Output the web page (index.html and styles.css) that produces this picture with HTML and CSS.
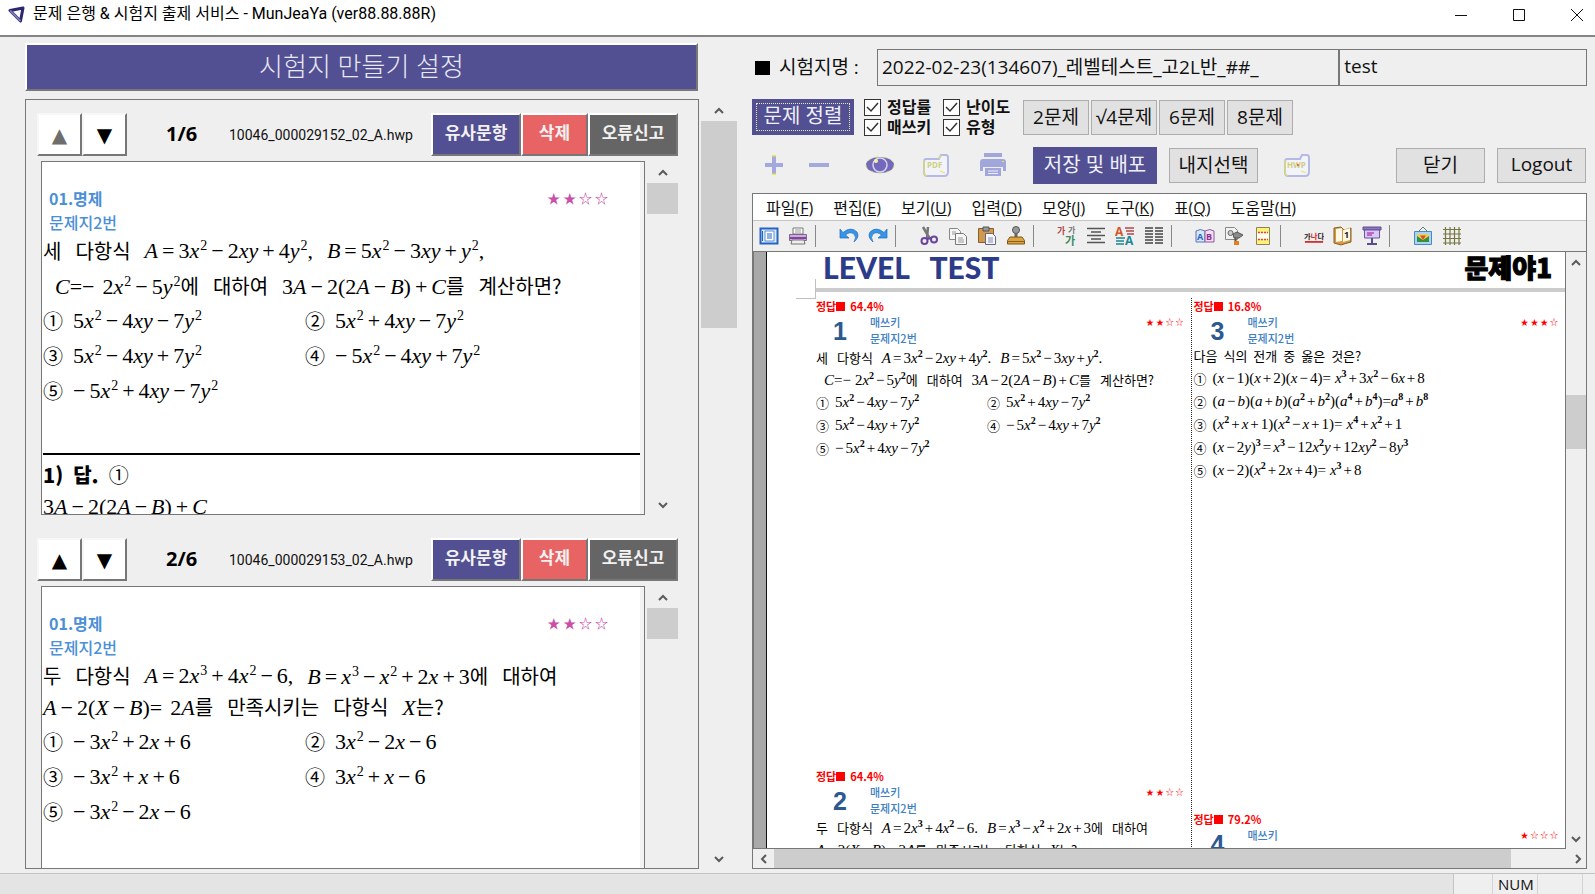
FILE: index.html
```
<!DOCTYPE html>
<html lang="ko">
<head>
<meta charset="utf-8">
<title>문제 은행 &amp; 시험지 출제 서비스</title>
<link rel="stylesheet" href="styles.css">
</head>
<body>
<header class="titlebar">
  <svg class="logo" viewBox="0 0 18 18"><path d="M2 4.500 15 2 12.500 15Z" fill="#fff" stroke="#2b2670" stroke-width="3" stroke-linejoin="round"/><path d="M2 4.500 12.500 15" stroke="#7d79b8" stroke-width="2"/></svg>
  <h1 class="title">문제 은행 &amp; 시험지 출제 서비스 - MunJeaYa (ver88.88.88R)</h1>
  <button class="win" aria-label="최소화"><svg viewBox="0 0 14 14"><path d="M1 7.500H13"/></svg></button>
  <button class="win" aria-label="최대화"><svg viewBox="0 0 14 14"><path d="M1.500 1.500h11v11h-11Z"/></svg></button>
  <button class="win" aria-label="닫기"><svg viewBox="0 0 14 14"><path d="M1 1 13 13M13 1 1 13"/></svg></button>
</header>

<main class="main">
  <section class="left">
    <button class="heading">시험지 만들기 설정</button>
    <div class="listwrap">
      <div class="panel">
        <article class="card">
          <div class="cardhead">
            <button class="move off">▲</button><button class="move">▼</button>
            <strong class="count">1/6</strong>
            <span class="file">10046_000029152_02_A.hwp</span>
            <button class="act blue">유사문항</button><button class="act red">삭제</button><button class="act gray">오류신고</button>
          </div>
          <div class="cardbody">
            <div class="doc">
              <div class="tags"><b>01.명제</b><span class="stars">★ ★ ☆ ☆</span></div>
              <div class="tags">문제지2번</div>
              <p class="line"><span>세</span><span>다항식</span><span class="m"><i>A</i><span class="o">=</span>3<i>x</i><sup>2</sup><span class="o">−</span>2<i>xy</i><span class="o">+</span>4<i>y</i><sup>2</sup>,</span><span class="m"><i>B</i><span class="o">=</span>5<i>x</i><sup>2</sup><span class="o">−</span>3<i>xy</i><span class="o">+</span><i>y</i><sup>2</sup>,</span></p>
              <p class="line ind"><span><span class="m"><i>C</i>=−<span class="o"></span>2<i>x</i><sup>2</sup><span class="o">−</span>5<i>y</i><sup>2</sup></span>에</span><span>대하여</span><span><span class="m">3<i>A</i><span class="o">−</span>2(2<i>A</i><span class="o">−</span><i>B</i>)<span class="o">+</span><i>C</i></span>를</span><span>계산하면?</span></p>
              <div class="opts">
                <p class="line"><span>①</span><span class="m">5<i>x</i><sup>2</sup><span class="o">−</span>4<i>xy</i><span class="o">−</span>7<i>y</i><sup>2</sup></span></p>
                <p class="line"><span>②</span><span class="m">5<i>x</i><sup>2</sup><span class="o">+</span>4<i>xy</i><span class="o">−</span>7<i>y</i><sup>2</sup></span></p>
                <p class="line"><span>③</span><span class="m">5<i>x</i><sup>2</sup><span class="o">−</span>4<i>xy</i><span class="o">+</span>7<i>y</i><sup>2</sup></span></p>
                <p class="line"><span>④</span><span class="m"><span class="o">−</span>5<i>x</i><sup>2</sup><span class="o">−</span>4<i>xy</i><span class="o">+</span>7<i>y</i><sup>2</sup></span></p>
                <p class="line"><span>⑤</span><span class="m"><span class="o">−</span>5<i>x</i><sup>2</sup><span class="o">+</span>4<i>xy</i><span class="o">−</span>7<i>y</i><sup>2</sup></span></p>
              </div>
              <div class="answer">
                <p class="line"><b>1)</b><b>답.</b><span>①</span></p>
                <p class="line"><span class="m">3<i>A</i><span class="o">−</span>2(2<i>A</i><span class="o">−</span><i>B</i>)<span class="o">+</span><i>C</i></span></p>
              </div>
            </div>
            <div class="vbar"><svg class="arr" viewBox="0 0 10 7"><path d="M1 6 5 2 9 6"/></svg><div class="thumb"></div><svg class="arr end" viewBox="0 0 10 7"><path d="M1 1 5 5 9 1"/></svg></div>
          </div>
        </article>
        <article class="card">
          <div class="cardhead">
            <button class="move">▲</button><button class="move">▼</button>
            <strong class="count">2/6</strong>
            <span class="file">10046_000029153_02_A.hwp</span>
            <button class="act blue">유사문항</button><button class="act red">삭제</button><button class="act gray">오류신고</button>
          </div>
          <div class="cardbody">
            <div class="doc">
              <div class="tags"><b>01.명제</b><span class="stars">★ ★ ☆ ☆</span></div>
              <div class="tags">문제지2번</div>
              <p class="line"><span>두</span><span>다항식</span><span class="m"><i>A</i><span class="o">=</span>2<i>x</i><sup>3</sup><span class="o">+</span>4<i>x</i><sup>2</sup><span class="o">−</span>6,</span><span><span class="m"><i>B</i><span class="o">=</span><i>x</i><sup>3</sup><span class="o">−</span><i>x</i><sup>2</sup><span class="o">+</span>2<i>x</i><span class="o">+</span>3</span>에</span><span>대하여</span></p>
              <p class="line tight"><span><span class="m"><i>A</i><span class="o">−</span>2(<i>X</i><span class="o">−</span><i>B</i>)=<span class="o"></span>2<i>A</i></span>를</span><span>만족시키는</span><span>다항식</span><span><span class="m"><i>X</i></span>는?</span></p>
              <div class="opts">
                <p class="line"><span>①</span><span class="m"><span class="o">−</span>3<i>x</i><sup>2</sup><span class="o">+</span>2<i>x</i><span class="o">+</span>6</span></p>
                <p class="line"><span>②</span><span class="m">3<i>x</i><sup>2</sup><span class="o">−</span>2<i>x</i><span class="o">−</span>6</span></p>
                <p class="line"><span>③</span><span class="m"><span class="o">−</span>3<i>x</i><sup>2</sup><span class="o">+</span><i>x</i><span class="o">+</span>6</span></p>
                <p class="line"><span>④</span><span class="m">3<i>x</i><sup>2</sup><span class="o">+</span><i>x</i><span class="o">−</span>6</span></p>
                <p class="line"><span>⑤</span><span class="m"><span class="o">−</span>3<i>x</i><sup>2</sup><span class="o">−</span>2<i>x</i><span class="o">−</span>6</span></p>
              </div>
            </div>
            <div class="vbar"><svg class="arr" viewBox="0 0 10 7"><path d="M1 6 5 2 9 6"/></svg><div class="thumb"></div></div>
          </div>
        </article>
      </div>
      <div class="vbar outer"><svg class="arr" viewBox="0 0 10 7"><path d="M1 6 5 2 9 6"/></svg><div class="thumb"></div><svg class="arr end" viewBox="0 0 10 7"><path d="M1 1 5 5 9 1"/></svg></div>
    </div>
  </section>

  <section class="right">
    <div class="namerow">
      <label for="exam"><span class="sq"></span>시험지명 :</label>
      <input id="exam" class="name" value="2022-02-23(134607)_레벨테스트_고2L반_##_">
      <input class="name user" aria-label="사용자" value="test">
    </div>
    <div class="sortrow">
      <button class="primary sort"><span>문제 정렬</span></button>
      <div class="checks">
        <label><input type="checkbox" checked>정답률</label>
        <label><input type="checkbox" checked>난이도</label>
        <label><input type="checkbox" checked>매쓰키</label>
        <label><input type="checkbox" checked>유형</label>
      </div>
      <div class="counts"><button class="btn">2문제</button><button class="btn">√4문제</button><button class="btn">6문제</button><button class="btn">8문제</button></div>
    </div>
    <div class="actionrow">
      <div class="icons">
        <button class="ico" aria-label="확대"><svg viewBox="0 0 30 30"><path d="M15 5V25" stroke="#e8e84a" stroke-width="4"/><path d="M6 15H24M15 6.500V23.500" stroke="#a3a9dc" stroke-width="4"/></svg></button>
        <button class="ico" aria-label="축소"><svg viewBox="0 0 30 30"><path d="M5 15H25" stroke="#a3a9dc" stroke-width="4"/></svg></button>
        <button class="ico eye" aria-label="미리보기"><svg viewBox="0 0 30 30"><ellipse cx="15" cy="15" rx="14" ry="8" fill="#7468bd" stroke="#cfdc50" stroke-dasharray="3 5"/><circle cx="15" cy="15" r="7" fill="#7468bd" stroke="#d7d4ee" stroke-width="1.500"/><circle cx="11" cy="11" r="2" fill="#f5f3a0"/></svg></button>
        <button class="ico" aria-label="PDF"><svg viewBox="0 0 30 30"><path d="M5 9H18L20 5H25Q27 5 27 8V22Q27 26 23 26H6Q3 26 3 22V12Q3 9 5 9Z" fill="#f3f3fb" stroke="#b4b9e6" stroke-width="2"/><path d="M3 10V22Q3 26 6 26M18 9 20 5" stroke="#e9e94a" stroke-width="1" fill="none"/><text x="6" y="18" font-size="8" font-weight="bold" fill="#cfcf7c">PDF</text><path d="M19 21 24 23" stroke="#e9e94a"/></svg></button>
        <button class="ico print" aria-label="인쇄"><svg viewBox="0 0 30 30"><path d="M6 3H24V7H6ZM5 9H25Q28 9 28 12V21H25V17H5V21H2V12Q2 9 5 9ZM7 18H23V26H7Z" fill="#a1a7db"/><path d="M10 21H20M10 23.500H20" stroke="#eef"/><path d="M24 11.500H26" stroke="#e8e84a"/></svg></button>
      </div>
      <button class="primary save">저장 및 배포</button>
      <button class="btn wide">내지선택</button>
      <button class="ico hwp" aria-label="HWP"><svg viewBox="0 0 30 30"><path d="M5 9H18L20 5H25Q27 5 27 8V22Q27 26 23 26H6Q3 26 3 22V12Q3 9 5 9Z" fill="#f3f3fb" stroke="#b4b9e6" stroke-width="2"/><path d="M3 10V22Q3 26 6 26" stroke="#e9e94a" fill="none"/><text x="5" y="18" font-size="8" font-weight="bold" fill="#cfcf7c">HWP</text><circle cx="16" cy="15" r="1" fill="#e05050"/><path d="M19 21 24 23" stroke="#e9e94a"/></svg></button>
      <button class="btn wide push">닫기</button>
      <button class="btn wide">Logout</button>
    </div>

    <div class="editor">
      <nav class="menu">
        <button>파일(<u>F</u>)</button><button>편집(<u>E</u>)</button><button>보기(<u>U</u>)</button><button>입력(<u>D</u>)</button><button>모양(<u>J</u>)</button><button>도구(<u>K</u>)</button><button>표(<u>Q</u>)</button><button>도움말(<u>H</u>)</button>
      </nav>
      <div class="tools">
        <div class="group">
          <button aria-label="쪽 보기"><svg viewBox="0 0 20 20"><path d="M1.500 2.500h17v15h-17Z" fill="#dce9fb" stroke="#2465c4" stroke-width="2"/><path d="M6 5h9v10H6Z" fill="#fff" stroke="#5d8fd6"/><path d="M3.500 5v10M8 8h5M8 10h5M8 12h5" stroke="#2465c4"/></svg></button>
          <button aria-label="인쇄"><svg viewBox="0 0 20 20"><path d="M5 2h10v6H5Z" fill="#fff" stroke="#777"/><path d="M7 4h6M7 6h6" stroke="#999"/><path d="M1.500 8.500h17v6h-17Z" fill="#c9aede" stroke="#776a88"/><path d="M2 12h16" stroke="#8b3fa5" stroke-width="2"/><path d="M4 14h12l1 4H3Z" fill="#eee" stroke="#777"/></svg></button>
        </div>
        <div class="group">
          <button aria-label="되돌리기"><svg viewBox="0 0 20 20"><path d="M1 3V12H10L6.500 9Q11 5 15 8 18 11 15 16 21 11 18 6 12 0 4 6.500Z" fill="#3795e8" stroke="#1f6fc0" stroke-width=".7"/></svg></button>
          <button aria-label="다시 실행"><svg viewBox="0 0 20 20"><path d="M19 3V12H10L13.500 9Q9 5 5 8 2 11 5 16-1 11 2 6 8 0 16 6.500Z" fill="#3795e8" stroke="#1f6fc0" stroke-width=".7"/></svg></button>
        </div>
        <div class="group">
          <button aria-label="오려 두기"><svg viewBox="0 0 20 20"><path d="M4 1 11 13M9 1 8 12" stroke="#777" stroke-width="2.500"/><circle cx="5.500" cy="15" r="3" fill="none" stroke="#6a45a0" stroke-width="2"/><circle cx="15" cy="13.500" r="3" fill="none" stroke="#6a45a0" stroke-width="2"/><path d="M8 13 12 12" stroke="#6a45a0" stroke-width="2"/></svg></button>
          <button aria-label="복사하기"><svg viewBox="0 0 20 20"><path d="M1.500 2.500h8l3 3v8h-11Z" fill="#f6f6f6" stroke="#888"/><path d="M7.500 7.500h8l3 3v8h-11Z" fill="#f6f6f6" stroke="#777"/><path d="M4 6h4M4 8h3M10 12h5M10 14h6M10 16h6" stroke="#999"/></svg></button>
          <button aria-label="붙이기"><svg viewBox="0 0 20 20"><path d="M1.500 2.500h15v14h-15Z" fill="#cf9a4e" stroke="#8a5f26"/><path d="M6 1h6v4H6Z" fill="#999" stroke="#555"/><path d="M8.500 7.500h7l3 3v8h-10Z" fill="#f4f8fb" stroke="#668"/><path d="M11 12h5M11 14h5M11 16h5" stroke="#88a"/></svg></button>
          <button aria-label="모양 복사"><svg viewBox="0 0 20 20"><circle cx="10" cy="4" r="3.500" fill="#999" stroke="#555"/><path d="M8.500 7h3v5h-3Z" fill="#666"/><path d="M1.500 14.500 4 11h12l2.500 3.500v3.500h-17Z" fill="#dca33e" stroke="#7c561b"/><path d="M2 15.500h16" stroke="#8a5f26"/></svg></button>
        </div>
        <div class="group">
          <button aria-label="글자 모양"><svg viewBox="0 0 20 20"><text x="0" y="8" font-size="9" font-weight="bold" fill="#b34848">가</text><text x="11" y="7" font-size="8" font-weight="bold" fill="#777">가</text><text x="8" y="19" font-size="11" font-weight="bold" fill="#3e8a5e">가</text></svg></button>
          <button aria-label="문단 모양"><svg viewBox="0 0 20 20"><path d="M1 2.500h18M5 6h10M1 9.500h18M5 13h10M1 16.500h18" stroke="#555" stroke-width="1.500"/></svg></button>
          <button aria-label="스타일"><svg viewBox="0 0 20 20"><text x="0" y="10" font-size="12" font-weight="bold" fill="#d4552a">A</text><text x="10" y="19" font-size="12" font-weight="bold" fill="#1c8796">A</text><path d="M10 2h9M11 5h8M12 8h7" stroke="#b34848" stroke-width="1.500"/><path d="M1 12h9M1 15h8M1 18h8" stroke="#1c8796" stroke-width="1.500"/></svg></button>
          <button aria-label="다단"><svg viewBox="0 0 20 20"><path d="M1 2h8M11 2h8M1 5h8M11 5h8M1 8h8M11 8h8M1 11h8M11 11h8M1 14h8M11 14h8M1 17h8M11 17h8" stroke="#444" stroke-width="1.500"/></svg></button>
        </div>
        <div class="group">
          <button aria-label="맞춤법"><svg viewBox="0 0 20 20"><path d="M1 5Q5 2 10 5V16H1Z" fill="#d5e6fb" stroke="#5576b5"/><path d="M10 5Q15 2 19 5V16H10Z" fill="#f4dcf2" stroke="#8a5a99"/><text x="2" y="14" font-size="9" font-weight="bold" fill="#2465c4">A</text><text x="11" y="14" font-size="9" font-weight="bold" fill="#8b2f95">B</text></svg></button>
          <button aria-label="찾기"><svg viewBox="0 0 20 20"><path d="M1.500 1.500h9l3 3v9h-12Z" fill="#f2f2f2" stroke="#888"/><circle cx="6.500" cy="7" r="2.500" fill="#ccc" stroke="#666"/><path d="M9 8 13 6 19 9 15 12H10Z" fill="#8a8a8a" stroke="#555"/><path d="M11.500 12v3" stroke="#555" stroke-width="2"/><path d="M10 15h5v4h-5Z" fill="#e07f1c"/></svg></button>
          <button aria-label="쪽 나누기"><svg viewBox="0 0 20 20"><path d="M3.500 1.500h13v17h-13Z" fill="#fff27a" stroke="#8b8458"/><path d="M4 7h12v6H4Z" fill="#fffef0"/><path d="M5 6.500h10M5 13.500h10" stroke="#e04040" stroke-width="1.500" stroke-dasharray="2 1"/></svg></button>
        </div>
        <div class="group">
          <button aria-label="글자 바꾸기"><svg viewBox="0 0 22 20"><text x="0" y="13" font-size="8" font-weight="bold" fill="#222">가<tspan fill="#d22">나</tspan>다</text><path d="M1 16.500h20" stroke="#c33" stroke-width="2"/></svg></button>
          <button aria-label="사전"><svg viewBox="0 0 20 20"><path d="M1 2 8 1l3 3 7-2v14l-7 2-3 1-7-2Z" fill="#d39a45" stroke="#8a5f26"/><path d="M3 3 9 2v13l-6 1ZM10 4l7-2v12l-7 2Z" fill="#fff8e4"/><text x="11" y="12" font-size="9" font-weight="bold" fill="#222">1</text></svg></button>
          <button aria-label="프레젠테이션"><svg viewBox="0 0 20 20"><path d="M1 1h18v3H1Z" fill="#8d76c2" stroke="#5c4c8b"/><path d="M2.500 4h15v8h-15Z" fill="#d9c9f2" stroke="#6a57a0"/><path d="M5 7h7M5 9h5" stroke="#b246b8" stroke-width="1.500"/><path d="M10 12v6M5 18h10" stroke="#5c4c8b" stroke-width="2"/></svg></button>
        </div>
        <div class="group">
          <button aria-label="그림"><svg viewBox="0 0 20 20"><path d="M6 5 10 1 14 5" fill="none" stroke="#677"/><path d="M1.500 5.500h17v13h-17Z" fill="#a8d4f5" stroke="#4a88bd"/><path d="M4 8h12v8H4Z" fill="#f2cf54"/><path d="M4 10 10 14 16 10v6H4Z" fill="#3a8f3a"/><path d="M7 9.500h6L10 14Z" fill="#d2522c"/></svg></button>
          <button aria-label="격자"><svg viewBox="0 0 20 20"><path d="M3.500 1v18M8 1v18M12.500 1v18M17 1v18M1 3.500h18M1 8h18M1 12.500h18M1 17h18" stroke="#777542" stroke-width="1.200"/></svg></button>
        </div>
      </div>
      <div class="view">
        <div class="canvas">
          <div class="paper">
            <div class="papertop"><h2>LEVEL&nbsp;&nbsp; TEST</h2><strong>문제야1</strong></div>
            <div class="cols">
              <span class="corner"></span>
              <div class="col">
                <article class="q">
                  <div class="rate">정답<span class="mark"></span>64.4%</div>
                  <div class="qhead"><b class="num">1</b><div>매쓰키<br>문제지2번</div><span class="stars">★ ★ ☆ ☆</span></div>
                  <p class="line"><span>세</span><span>다항식</span><span class="m"><i>A</i><span class="o">=</span>3<i>x</i><sup>2</sup><span class="o">−</span>2<i>xy</i><span class="o">+</span>4<i>y</i><sup>2</sup>.</span><span class="m"><i>B</i><span class="o">=</span>5<i>x</i><sup>2</sup><span class="o">−</span>3<i>xy</i><span class="o">+</span><i>y</i><sup>2</sup>.</span></p>
                  <p class="line ind"><span><span class="m"><i>C</i>=−<span class="o"></span>2<i>x</i><sup>2</sup><span class="o">−</span>5<i>y</i><sup>2</sup></span>에</span><span>대하여</span><span><span class="m">3<i>A</i><span class="o">−</span>2(2<i>A</i><span class="o">−</span><i>B</i>)<span class="o">+</span><i>C</i></span>를</span><span>계산하면?</span></p>
                  <div class="opts">
                    <p class="line"><span>①</span><span class="m">5<i>x</i><sup>2</sup><span class="o">−</span>4<i>xy</i><span class="o">−</span>7<i>y</i><sup>2</sup></span></p>
                    <p class="line"><span>②</span><span class="m">5<i>x</i><sup>2</sup><span class="o">+</span>4<i>xy</i><span class="o">−</span>7<i>y</i><sup>2</sup></span></p>
                    <p class="line"><span>③</span><span class="m">5<i>x</i><sup>2</sup><span class="o">−</span>4<i>xy</i><span class="o">+</span>7<i>y</i><sup>2</sup></span></p>
                    <p class="line"><span>④</span><span class="m"><span class="o">−</span>5<i>x</i><sup>2</sup><span class="o">−</span>4<i>xy</i><span class="o">+</span>7<i>y</i><sup>2</sup></span></p>
                    <p class="line"><span>⑤</span><span class="m"><span class="o">−</span>5<i>x</i><sup>2</sup><span class="o">+</span>4<i>xy</i><span class="o">−</span>7<i>y</i><sup>2</sup></span></p>
                  </div>
                </article>
                <article class="q">
                  <div class="rate">정답<span class="mark"></span>64.4%</div>
                  <div class="qhead"><b class="num">2</b><div>매쓰키<br>문제지2번</div><span class="stars">★ ★ ☆ ☆</span></div>
                  <p class="line"><span>두</span><span>다항식</span><span class="m"><i>A</i><span class="o">=</span>2<i>x</i><sup>3</sup><span class="o">+</span>4<i>x</i><sup>2</sup><span class="o">−</span>6.</span><span><span class="m"><i>B</i><span class="o">=</span><i>x</i><sup>3</sup><span class="o">−</span><i>x</i><sup>2</sup><span class="o">+</span>2<i>x</i><span class="o">+</span>3</span>에</span><span>대하여</span></p>
                  <p class="line"><span><span class="m"><i>A</i><span class="o">−</span>2(<i>X</i><span class="o">−</span><i>B</i>)=<span class="o"></span>2<i>A</i></span>를</span><span>만족시키는</span><span>다항식</span><span><span class="m"><i>X</i></span>는?</span></p>
                </article>
              </div>
              <div class="col second">
                <article class="q tall">
                  <div class="rate">정답<span class="mark"></span>16.8%</div>
                  <div class="qhead"><b class="num">3</b><div>매쓰키<br>문제지2번</div><span class="stars">★ ★ ★ ☆</span></div>
                  <p class="line"><span>다음</span><span>식의</span><span>전개</span><span>중</span><span>옳은</span><span>것은?</span></p>
                  <p class="line"><span>①</span><span class="m">(<i>x</i><span class="o">−</span>1)(<i>x</i><span class="o">+</span>2)(<i>x</i><span class="o">−</span>4)=<span class="o"></span><i>x</i><sup>3</sup><span class="o">+</span>3<i>x</i><sup>2</sup><span class="o">−</span>6<i>x</i><span class="o">+</span>8</span></p>
                  <p class="line"><span>②</span><span class="m">(<i>a</i><span class="o">−</span><i>b</i>)(<i>a</i><span class="o">+</span><i>b</i>)(<i>a</i><sup>2</sup><span class="o">+</span><i>b</i><sup>2</sup>)(<i>a</i><sup>4</sup><span class="o">+</span><i>b</i><sup>4</sup>)=<i>a</i><sup>8</sup><span class="o">+</span><i>b</i><sup>8</sup></span></p>
                  <p class="line"><span>③</span><span class="m">(<i>x</i><sup>2</sup><span class="o">+</span><i>x</i><span class="o">+</span>1)(<i>x</i><sup>2</sup><span class="o">−</span><i>x</i><span class="o">+</span>1)=<span class="o"></span><i>x</i><sup>4</sup><span class="o">+</span><i>x</i><sup>2</sup><span class="o">+</span>1</span></p>
                  <p class="line"><span>④</span><span class="m">(<i>x</i><span class="o">−</span>2<i>y</i>)<sup>3</sup><span class="o">=</span><i>x</i><sup>3</sup><span class="o">−</span>12<i>x</i><sup>2</sup><i>y</i><span class="o">+</span>12<i>xy</i><sup>2</sup><span class="o">−</span>8<i>y</i><sup>3</sup></span></p>
                  <p class="line"><span>⑤</span><span class="m">(<i>x</i><span class="o">−</span>2)(<i>x</i><sup>2</sup><span class="o">+</span>2<i>x</i><span class="o">+</span>4)=<span class="o"></span><i>x</i><sup>3</sup><span class="o">+</span>8</span></p>
                </article>
                <article class="q">
                  <div class="rate">정답<span class="mark"></span>79.2%</div>
                  <div class="qhead"><b class="num">4</b><div>매쓰키</div><span class="stars">★ ☆ ☆ ☆</span></div>
                </article>
              </div>
            </div>
          </div>
        </div>
        <div class="vbar edit"><svg class="arr" viewBox="0 0 10 7"><path d="M1 6 5 2 9 6"/></svg><div class="thumb"></div><svg class="arr end" viewBox="0 0 10 7"><path d="M1 1 5 5 9 1"/></svg></div>
      </div>
      <div class="hbar"><svg class="arr" viewBox="0 0 7 10"><path d="M6 1 2 5 6 9"/></svg><div class="hthumb"></div><svg class="arr" viewBox="0 0 7 10"><path d="M1 1 5 5 1 9"/></svg></div>
    </div>
  </section>
</main>

<footer class="status"><div class="msg"></div><div class="cell"></div><div class="cell">NUM</div><div class="cell"></div></footer>
</body>
</html>
```
FILE: styles.css
```
* { box-sizing: border-box; }
body {
  margin: 0;
  height: 100vh;
  display: flex;
  flex-direction: column;
  overflow: hidden;
  background: #efefef;
  color: #111;
  font-family: "Open Sans", "Noto Sans CJK KR", sans-serif;
  font-size: 15px;
}
button, input {
  font-family: inherit;
  color: inherit;
  margin: 0;
  padding: 0;
  border: 0;
  border-radius: 0;
  background: none;
  white-space: nowrap;
}
p, h1, h2 { margin: 0; font-weight: normal; }
svg { display: block; }

.titlebar {
  flex: none;
  display: flex;
  align-items: center;
  height: 37px;
  padding: 0 11px 6px 8px;
  background: #fff;
  border-bottom: 2px solid #858585;
}
.logo { width: 18px; height: 18px; }
.title {
  flex: 1;
  margin-left: 7px;
  padding-bottom: 2px;
  font-family: Roboto, "Noto Sans CJK KR", sans-serif;
  font-size: 16px;
  line-height: 20px;
  color: #000;
}
.win { width: 14px; margin-left: 44px; }
.win svg { width: 14px; height: 14px; fill: none; stroke: #111; stroke-width: 1; }

.main {
  flex: 1;
  min-height: 0;
  display: grid;
  grid-template-columns: 712fr 835fr;
  grid-template-rows: minmax(0, 1fr);
  gap: 15px;
  padding: 6px 8px 0 25px;
}
.left, .right { display: flex; flex-direction: column; min-width: 0; min-height: 0; }

.heading {
  height: 48px;
  margin: 0 39px 8px 0;
  padding-bottom: 4px;
  background: #525092;
  color: #e8e8f4;
  border: 2px solid #777;
  border-top-color: #fff;
  border-left-color: #fff;
  font-size: 26px;
  font-weight: 300;
}
.listwrap { flex: 1; min-height: 0; display: flex; gap: 2px; }
.panel {
  flex: 1;
  min-width: 0;
  overflow: hidden;
  border: 1px solid #777;
  padding: 13px 20px 0 11px;
}
.card { margin-bottom: 23px; }
.cardhead { display: flex; align-items: center; height: 43px; margin-bottom: 5px; }
.move {
  width: 45px;
  height: 43px;
  background: #fff;
  border: 2px solid #777;
  border-top-color: #f7f7f7;
  border-left-color: #f7f7f7;
  font-family: "DejaVu Sans", sans-serif;
  font-size: 20px;
  color: #000;
}
.off { color: #6d6d6d; }
.count { width: 33px; margin-left: 39px; padding-bottom: 3px; font-size: 20px; color: #000; }
.file { flex: 1; margin-left: 30px; font-family: Roboto, sans-serif; font-size: 14px; white-space: nowrap; }
.act {
  height: 43px;
  padding-bottom: 6px;
  color: #f2f2f2;
  border: 2px solid #777;
  border-top-color: #fff;
  border-left-color: #fff;
  font-size: 17px;
  font-weight: 600;
}
.blue { width: 90px; background: #525092; }
.red { width: 67px; background: #e86464; }
.gray { width: 90px; background: #656565; }

.cardbody { display: flex; gap: 2px; height: 354px; padding-left: 4px; }
.doc {
  flex: 1;
  min-width: 0;
  overflow: hidden;
  padding-top: 24px;
  background: #fff;
  border: 1px solid #777;
  box-shadow: inset -4px 0 #f3f3f3;
  font-family: "Noto Sans CJK KR", sans-serif;
  font-size: 20px;
  font-weight: 300;
}
.tags {
  display: flex;
  justify-content: space-between;
  padding: 0 36px 0 7px;
  font-size: 16px;
  font-weight: 500;
  line-height: 24px;
  color: #4a90d6;
}
.tags .stars { color: #c94fa8; font-size: 13px; }
.line {
  display: flex;
  gap: 14px;
  padding-left: 1px;
  height: 35px;
  line-height: 33px;
  white-space: nowrap;
  color: #000;
}
.ind { padding-left: 13px; }
.tight { height: 31px; line-height: 26px; }
.m { font-family: "Liberation Serif", serif; font-size: 22px; font-weight: 400; }
.m .o { margin: 0 4px; }
.m .o:first-child { margin-left: 0; }
.m sup { font-size: 14px; line-height: 0; margin-left: 1px; vertical-align: 8px; }
.opts { display: grid; grid-template-columns: 262px 1fr; }
.opts .line { gap: 10px; }
.answer { margin: 44px 4px 0 1px; padding-top: 3px; border-top: 2px solid #000; }
.answer b { font-weight: 900; }
.answer .line { gap: 10px; height: 32px; padding-left: 0; }

.vbar { display: flex; flex-direction: column; align-items: center; width: 31px; padding: 8px 0 6px; }
.arr { flex: none; width: 10px; height: 7px; fill: none; stroke: #5b5b5b; stroke-width: 2; }
.vbar .end { margin-top: auto; }
.thumb { width: 100%; height: 31px; margin-top: 7px; background: #cdcdcd; }
.outer { width: 36px; }
.outer .thumb { height: 207px; }

.namerow { display: flex; height: 37px; margin-top: 6px; font-size: 19px; }
.namerow label { display: flex; align-items: center; width: 125px; padding: 0 0 4px 3px; white-space: nowrap; }
.sq { width: 15px; height: 14px; margin: 4px 9px 0 0; background: #000; }
.name { flex: 449 1 0; min-width: 0; padding: 0 4px 4px; border: 1px solid #777; font-size: 19px; }
.user { flex-grow: 236; }

.sortrow { display: flex; align-items: center; margin-top: 11px; }
.primary { padding-bottom: 4px; background: #525092; color: #f0f0fa; font-size: 20px; }
.sort { width: 102px; height: 36px; padding: 4px; }
.sort span { display: block; height: 28px; line-height: 24px; border: 1px dotted #e8e8b0; }
.checks { display: grid; grid-template-columns: 79px auto; margin-left: 10px; width: 150px; }
.checks label { display: flex; align-items: center; gap: 6px; height: 20px; font-size: 16px; font-weight: 700; line-height: 16px; white-space: nowrap; }
.checks input {
  appearance: none;
  flex: none;
  width: 17px;
  height: 17px;
  background: #fff url("data:image/svg+xml,%3Csvg xmlns='http://www.w3.org/2000/svg' viewBox='0 0 15 15'%3E%3Cpath d='M2 7 6 11 13 3' fill='none' stroke='%23333' stroke-width='1.500'/%3E%3C/svg%3E") center;
  border: 1px solid #333;
}
.counts { display: flex; gap: 2px; margin-left: 9px; }
.btn { width: 66px; height: 35px; padding-bottom: 3px; background: #e1e1e1; border: 1px solid #adadad; font-size: 19px; }
.wide { width: 89px; }

.actionrow { display: flex; align-items: center; height: 38px; margin: 9px 0; padding-right: 1px; }
.icons { display: flex; width: 281px; padding-left: 7px; }
.ico svg { width: 30px; height: 30px; fill: none; }
.icons .ico { width: 30px; margin-right: 15px; }
.icons .eye { margin: 0 26px 0 16px; }
.icons .print { margin: 0 0 0 12px; }
.save { width: 124px; height: 37px; margin-right: 12px; }
.hwp { width: 30px; margin-left: 24px; }
.push { margin: 0 12px 0 auto; }

.editor { flex: 1; min-height: 0; display: flex; flex-direction: column; border: 1px solid #777; }
.menu { display: flex; gap: 20px; height: 27px; padding-left: 13px; background: #fff; border-bottom: 1px solid #c4c4c4; }
.menu button { font-size: 16px; }
.tools { display: flex; align-items: center; height: 30px; padding-left: 1px; }
.group { display: flex; margin-right: 18px; padding-right: 3px; border-right: 1px solid #888; }
.group:last-child { border: 0; }
.group button { width: 29px; height: 22px; padding-left: 5px; }
.group svg { width: 20px; height: 20px; }

.view { flex: 1; min-height: 0; display: flex; border-top: 1px solid #777; }
.canvas { flex: 1; min-width: 0; display: flex; padding-left: 12px; background: #a9a9a9; border: solid #777; border-width: 0 1px 1px 1px; overflow: hidden; }
.paper { flex: 1; min-width: 0; background: #fff; border-left: 1px solid #111; font-family: "Noto Sans CJK KR", sans-serif; font-size: 13px; padding-left: 49px; }
.papertop { display: flex; justify-content: space-between; align-items: center; height: 40px; padding: 0 13px 7px 7px; border-bottom: 4px solid #ccc; white-space: nowrap; }
.papertop h2 { font-family: Lato, sans-serif; font-size: 30px; line-height: 30px; font-weight: 900; color: #2c3b8a; }
.papertop strong { font-size: 26px; line-height: 30px; font-weight: 900; color: #000; -webkit-text-stroke: 1px #000; }
.cols { position: relative; display: grid; grid-template-columns: 375fr 375fr; }
.corner { position: absolute; left: -20px; top: -13px; width: 20px; height: 20px; border: solid #c0c0c0; border-width: 0 1px 1px 0; }
.col { margin-top: 6px; min-width: 0; }
.second { border-left: 1px dotted #222; padding-left: 2px; }
.q { height: 470px; }
.tall { height: 513px; }
.rate { display: flex; align-items: center; height: 16px; font-size: 11px; font-weight: 700; color: #f00; }
.mark { width: 9px; height: 9px; margin-right: 5px; background: #f00; }
.qhead { display: flex; height: 33px; padding-right: 7px; font-size: 11px; font-weight: 500; line-height: 16px; color: #3d80c4; }
.num { width: 54px; padding-left: 17px; font-family: "Liberation Sans", sans-serif; font-size: 25px; line-height: 34px; color: #2c5a90; }
.qhead .stars { margin-left: auto; font-size: 8px; color: #f00; }
.q .line { gap: 9px; height: 22px; line-height: 22px; padding-left: 0; }
.q .ind { padding-left: 8px; }
.q .m { font-size: 15px; }
.q .m .o { margin: 0 2px; }
.q .m .o:first-child { margin-left: 0; }
.q .m sup { font-size: 10px; font-weight: 700; margin-left: 0; vertical-align: 6px; }
.q .opts { grid-template-columns: 171px 1fr; }
.q .opts .line, .tall .line { height: 23px; line-height: 23px; gap: 6px; }
.tall .qhead { height: 30px; }

.edit { width: 20px; padding: 7px 0 6px; }
.edit .thumb { height: 54px; margin-top: 129px; }
.hbar { display: flex; align-items: center; justify-content: space-between; height: 19px; padding: 0 4px 0 7px; }
.hbar .arr { width: 7px; height: 10px; }
.hthumb { flex: 1; height: 100%; margin: 0 64px 0 7px; background: #cdcdcd; }

.status { flex: none; display: flex; height: 21px; margin-top: 4px; border-top: 1px solid #c4c4c4; font-size: 15px; line-height: 20px; }
.msg { flex: 1; background: #e4e4e4; border-right: 1px solid #c4c4c4; }
.cell { width: 45px; padding-left: 5px; border-right: 1px solid #d4d4d4; }
.cell:nth-child(2) { width: 39px; }
.cell:last-child { margin-right: 12px; }
```
